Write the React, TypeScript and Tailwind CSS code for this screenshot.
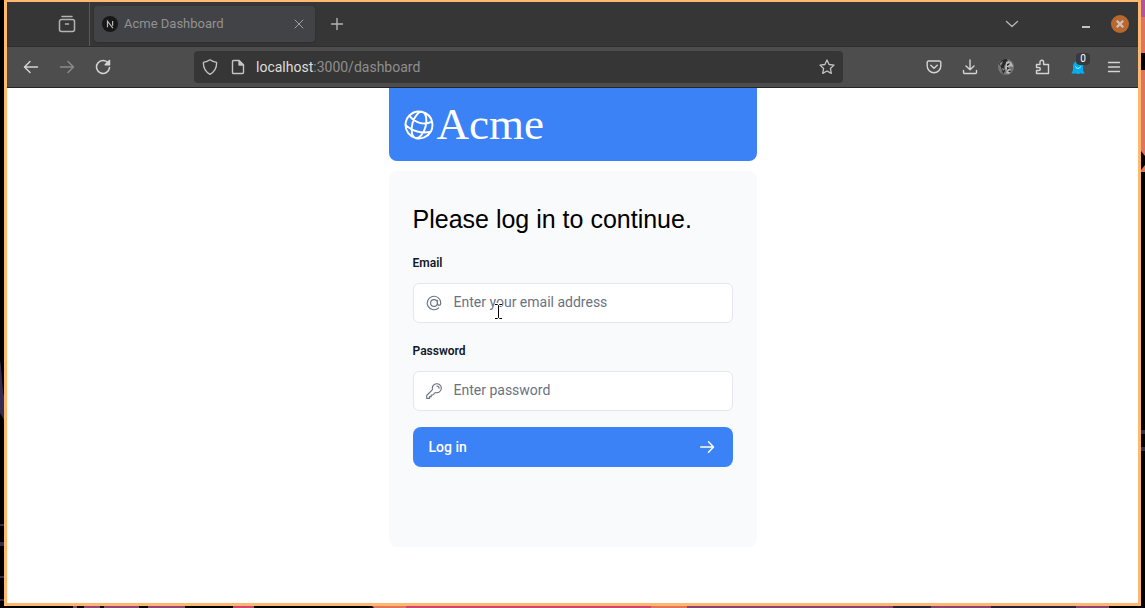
import type { ReactNode } from "react";

function Svg({ size, sw = 1.5, children, className = "" }: { size: number; sw?: number; children: ReactNode; className?: string }) {
  return (
    <svg width={size} height={size} viewBox={`0 0 ${size} ${size}`} fill="none" stroke="currentColor" strokeWidth={sw} strokeLinecap="round" strokeLinejoin="round" className={`shrink-0 ${className}`} aria-hidden="true">
      {children}
    </svg>
  );
}

function Hero({ d, size, sw = 1.5, className = "" }: { d: string; size: number; sw?: number; className?: string }) {
  return (
    <svg width={size} height={size} viewBox="0 0 24 24" fill="none" stroke="currentColor" strokeWidth={sw} strokeLinecap="round" strokeLinejoin="round" className={`shrink-0 ${className}`} aria-hidden="true">
      <path d={d} />
    </svg>
  );
}

const AT =
  "M16.5 12a4.5 4.5 0 1 1-9 0 4.5 4.5 0 0 1 9 0Zm0 0c0 1.657 1.007 3 2.25 3S21 13.657 21 12a9 9 0 1 0-2.636 6.364M16.5 12V8.25";
const KEY =
  "M15.75 5.25a3 3 0 0 1 3 3m3 0a6 6 0 0 1-7.029 5.912c-.563-.097-1.159.026-1.563.43L10.5 17.25H8.25v2.25H6v2.25H2.25v-2.818c0-.597.237-1.17.659-1.591l6.499-6.499c.404-.404.527-1 .43-1.563A6 6 0 1 1 21.75 8.25Z";
const GLOBE =
  "M12 21a9.004 9.004 0 0 0 8.716-6.747M12 21a9.004 9.004 0 0 1-8.716-6.747M12 21c2.485 0 4.5-4.03 4.5-9S14.485 3 12 3m0 18c-2.485 0-4.5-4.03-4.5-9S9.515 3 12 3m0 0a8.997 8.997 0 0 1 7.843 4.582M12 3a8.997 8.997 0 0 0-7.843 4.582m15.686 0A11.953 11.953 0 0 1 12 10.5c-2.998 0-5.74-1.1-7.843-2.918m15.686 0A8.959 8.959 0 0 1 21 12c0 .778-.099 1.533-.284 2.253m0 0A17.919 17.919 0 0 1 12 16.5c-3.162 0-6.133-.815-8.716-2.247m0 0A9.015 9.015 0 0 1 3 12c0-1.605.42-3.113 1.157-4.418";

function IconButton({ label, children, className = "" }: { label: string; children: ReactNode; className?: string }) {
  return (
    <button type="button" aria-label={label} className={`flex size-9 shrink-0 items-center justify-center ${className}`}>
      {children}
    </button>
  );
}

function TabBar() {
  return (
    <div className="flex h-11 items-center bg-[#363636] text-[#b4b4b4]">
      <div className="flex h-full w-[83px] shrink-0 items-center justify-end border-r border-[#5a5a5a] pr-1">
        <IconButton label="Firefox View">
          <Svg size={18}>
            <path d="M4 1.5h10" />
            <path d="M3.5 4.5h11a2 2 0 0 1 2 2v8a2 2 0 0 1-2 2h-11a2 2 0 0 1-2-2v-8a2 2 0 0 1 2-2ZM7.5 9h3" />
          </Svg>
        </IconButton>
      </div>
      <div className="ml-1 flex h-9 w-[221px] items-center rounded bg-[#424346] pr-2 pl-2 shadow-sm">
        <svg width="16" height="16" viewBox="0 0 16 16" aria-hidden="true" className="shrink-0">
          <circle cx="8" cy="8" r="8" fill="#171717" />
          <path d="M5.5 11.200V5.2l5.400 7M10.600 5v4.800" stroke="#b9b9b9" strokeWidth="1.2" fill="none" />
        </svg>
        <span className="ml-1.5 flex-1 text-[13px] text-[#929292]">Acme Dashboard</span>
        <button type="button" aria-label="Close tab" className="flex size-4 items-center justify-center text-[#a0a0a0]">
          <Svg size={10} sw={1}>
            <path d="M1 1l8 8M9 1 1 9" />
          </Svg>
        </button>
      </div>
      <IconButton label="New tab" className="ml-1">
        <Svg size={14} sw={1.4}>
          <path d="M7 1.5v11M1.5 7h11" />
        </Svg>
      </IconButton>
      <div className="flex-1" />
      <IconButton label="List all tabs" className="mr-10">
        <Svg size={14} sw={1.4}>
          <path d="m1.5 4.5 5.5 5 5.5-5" />
        </Svg>
      </IconButton>
      <div className="flex">
        <button type="button" aria-label="Minimize" className="flex h-9 w-8 items-center justify-center">
          <svg width="10" height="10" viewBox="0 0 10 10" aria-hidden="true">
            <path d="M1 8h8" stroke="#c2c2c2" strokeWidth="2" />
          </svg>
        </button>
        <IconButton label="Close window">
          <svg width="18" height="18" viewBox="0 0 18 18" aria-hidden="true">
            <circle cx="9" cy="9" r="9" fill="#b8682f" />
            <path d="m5.8 5.8 6.4 6.4m0-6.4-6.4 6.4" stroke="#cfc4bd" strokeWidth="2.2" />
          </svg>
        </IconButton>
      </div>
    </div>
  );
}

function Toolbar() {
  return (
    <div className="flex h-[41px] items-center border-b border-[#262626] bg-[#4d4d4d] px-1.5 text-[#d4d4d4]">
      <IconButton label="Back">
        <Svg size={16}>
          <path d="M14.5 8h-13M7 2.5 1.5 8 7 13.5" />
        </Svg>
      </IconButton>
      <IconButton label="Forward" className="text-[#8a8a8a]">
        <Svg size={16}>
          <path d="M1.5 8h13M9 2.5 14.5 8 9 13.5" />
        </Svg>
      </IconButton>
      <IconButton label="Reload">
        <Svg size={16}>
          <path d="M13.2 4A6.5 6.5 0 1 0 14.5 8.6" />
          <path d="M14.5 1.5v4.3h-4.3z" fill="currentColor" />
        </Svg>
      </IconButton>
      <div className="ml-[73px] flex h-8 min-w-0 flex-1 items-center gap-3 rounded bg-[#363636] px-2">
        <Svg size={16} sw={1.3} className="text-[#c4c4c4]">
          <path d="M8 .8c2 1.5 4 2.2 6.6 2.5.2 5-1.200 9.200-6.600 12C2.600 12.500 1.200 8.300 1.400 3.300 4 3 6 2.300 8 .8Z" />
        </Svg>
        <Svg size={16} sw={1.4} className="text-[#c4c4c4]">
          <path d="M3.500 1.500h5.500l4.500 4.500v7.500a1 1 0 0 1-1 1h-9a1 1 0 0 1-1-1v-11a1 1 0 0 1 1-1Z" />
          <path d="M9 1.500v4.500h4.500z" fill="currentColor" />
        </Svg>
        <a href="#dashboard" className="-ml-0.5 flex-1 text-sm text-[#8f8f8f]">
          <span className="text-[#dedede]">localhost</span>:3000/dashboard
        </a>
        <button type="button" aria-label="Bookmark this page">
          <Svg size={16} sw={1.3} className="text-[#c4c4c4]">
            <path d="m8 1 2.100 4.500 4.900.6-3.600 3.400.9 4.900L8 12l-4.300 2.400.9-4.900L1 6.100l4.900-.6Z" />
          </Svg>
        </button>
      </div>
      <div className="ml-[73px] flex">
        <IconButton label="Save to Pocket">
          <Svg size={16} sw={1.400}>
            <path d="M2.500 2h11a1.300 1.300 0 0 1 1.300 1.300V7a6.800 6.800 0 0 1-13.600 0V3.300A1.300 1.300 0 0 1 2.500 2ZM4.800 6.300 8 9.300l3.200-3" />
          </Svg>
        </IconButton>
        <IconButton label="Downloads">
          <Svg size={16} sw={1.400}>
            <path d="M8 1v9.500M4 7l4 3.800L12 7M1.500 11.500v2a1 1 0 0 0 1 1h11a1 1 0 0 0 1-1v-2" />
          </Svg>
        </IconButton>
        <IconButton label="Extension profile">
          <svg width="16" height="16" viewBox="0 0 16 16" aria-hidden="true">
            <circle cx="8" cy="8" r="8" fill="#747474" />
            <path d="M9 0A8 8 0 0 0 1 5l2 3 2 7 2-3-1-5 4-4Z" fill="#292929" />
            <path d="m2 4 3-2-1 3-2 2Zm2 5 3 1-2 2Z" fill="#8a8a8a" />
            <path d="M8 3c3-2 7 1 7 5l-3-1-1 2 2 2-2 4-3-1 1-3-2-1Z" fill="#b8b8b8" />
            <path d="m9 5 3-1-1 2-2 1Zm3 4-3-1v3Zm-2 4 2-2 1 2Z" fill="#292929" />
          </svg>
        </IconButton>
        <IconButton label="Extensions">
          <Svg size={16} sw={1.400}>
            <path d="M2.500 5.500H6V3a1.800 1.800 0 0 1 3.600 0v2.500h4.900v9h-12v-3h2.300a1.500 1.500 0 0 0 0-3H2.500Z" />
          </Svg>
        </IconButton>
        <IconButton label="Ghostery, 0 trackers" className="relative">
          <svg width="14" height="16" viewBox="0 0 14 16" aria-hidden="true">
            <path d="M2 7a5 5 0 0 1 10 0v4l1.500 3.500-2 .2-2-.5-2.500 1-2.500-1-2 .5-2-.2L2 11Z" fill="#00aef0" />
            <path d="M4.500 7.500c1 2.500 4 2.500 5 0" stroke="#e4f6ff" fill="none" />
          </svg>
          <span className="absolute top-1 left-4 flex h-3 w-3.5 items-center justify-center rounded-sm bg-[#38383d] text-[10px] leading-3 text-white">0</span>
        </IconButton>
        <IconButton label="Open application menu">
          <Svg size={14} sw={1.300}>
            <path d="M1.500 2.500h11M1.500 7h11M1.500 11.500h11" />
          </Svg>
        </IconButton>
      </div>
    </div>
  );
}

function Field({ id, label, type, placeholder, icon }: { id: string; label: string; type: string; placeholder: string; icon: string }) {
  return (
    <div>
      <label htmlFor={id} className="mt-5 mb-3 block text-xs leading-4 font-semibold text-gray-900">
        {label}
      </label>
      <div className="relative">
        <input id={id} name={id} type={type} placeholder={placeholder} className="block h-10 w-full rounded-md border border-gray-200 bg-white pb-0.5 pl-10 text-sm placeholder:text-gray-500" />
        <Hero d={icon} size={18} className="pointer-events-none absolute top-1/2 left-3 -translate-y-1/2 text-gray-500" />
      </div>
    </div>
  );
}

function Wallpaper() {
  return (
    <svg className="absolute inset-0 h-full w-full" viewBox="0 0 1145 608" preserveAspectRatio="none" aria-hidden="true">
      <path d="M0 0h1145v608H0z" fill="#000" />
      <path d="M0 360c2 8 2 30 4 36v24l-4-7ZM0 524h4v2H0ZM0 542h4v4H0ZM0 576h4v2H0ZM0 599h4v2H0ZM1141 430h4v4h-4ZM1141 447h4v4h-4Z" fill="#332b50" />
      <path d="M1141 0h4v17h-4z" fill="#b4559c" />
      <path d="M1141 17h4v36h-4zM1141 70h4v86l-4-5zM1141 170l4-5v7h-4zM372 606h38v2h-36z" fill="#df7659" />
      <path d="M73 606h4v2h-4zM84 606h16v2H84zM104 606h35v2h-35zM148 606h37v2h-37z" fill="#944975" />
      <path d="M233 606h21v2h-21zM406 606h245v2H406z" fill="#d04470" />
      <path d="M651 606h36v2h-36z" fill="#df7659" />
      <path d="M687 606h206v2H687zM931 606h60v2h-60zM1076 606h33v2h-33z" fill="#8a436c" />
      <path d="M893 606h38v2h-38zM991 606h85v2h-85z" fill="#29213e" />
    </svg>
  );
}

export default function App() {
  return (
    <div className="relative flex min-h-screen flex-col bg-black pr-1 pb-0.5 pl-1 font-['Roboto',sans-serif]">
      <Wallpaper />
      <div className="relative flex flex-1 flex-col border-x-3 border-t-2 border-b-3 border-[#ffb870] bg-white">
        <header>
          <div className="border-b border-[#2e2e2e]">
            <TabBar />
          </div>
          <Toolbar />
        </header>
        <main className="mx-auto flex w-full max-w-[368px] flex-1 flex-col">
          <div className="flex h-[73px] items-center rounded-b-lg bg-[#3b82f6] px-3 text-white">
            <Hero d={GLOBE} size={36} sw={1.3} className="rotate-15" />
            <span className="font-['Liberation_Serif',serif] text-[45px] leading-none">Acme</span>
          </div>
          <form className="mt-2.5 rounded-lg bg-gray-50 px-6 pt-8 pb-20" onSubmit={(e) => e.preventDefault()}>
            <h1 className="font-['Liberation_Sans',sans-serif] text-[25px] leading-8 whitespace-nowrap text-black">Please log in to continue.</h1>
            <Field id="email" label="Email" type="email" placeholder="Enter your email address" icon={AT} />
            <Field id="password" label="Password" type="password" placeholder="Enter password" icon={KEY} />
            <button type="submit" className="mt-4 flex h-10 w-full items-center justify-between rounded-lg bg-[#3b82f6] px-4 text-sm font-medium text-white">
              Log in
              <Svg size={20}>
                <path d="M3.750 10h12.500M11.500 4.750 16.500 10l-5 5.250" />
              </Svg>
            </button>
          </form>
        </main>
      </div>
      <svg className="pointer-events-none absolute top-[303px] left-[494px]" width="9" height="17" viewBox="0 0 9 17" fill="none" aria-hidden="true">
        <path d="M1 1.500h2.500l1 1 1-1H8M4.500 2.500v12M1 15.500h2.500l1-1 1 1H8" stroke="white" strokeWidth="3" />
        <path d="M1 1.500h2.500l1 1 1-1H8M4.500 2.500v12M1 15.500h2.500l1-1 1 1H8" stroke="black" />
      </svg>
    </div>
  );
}
